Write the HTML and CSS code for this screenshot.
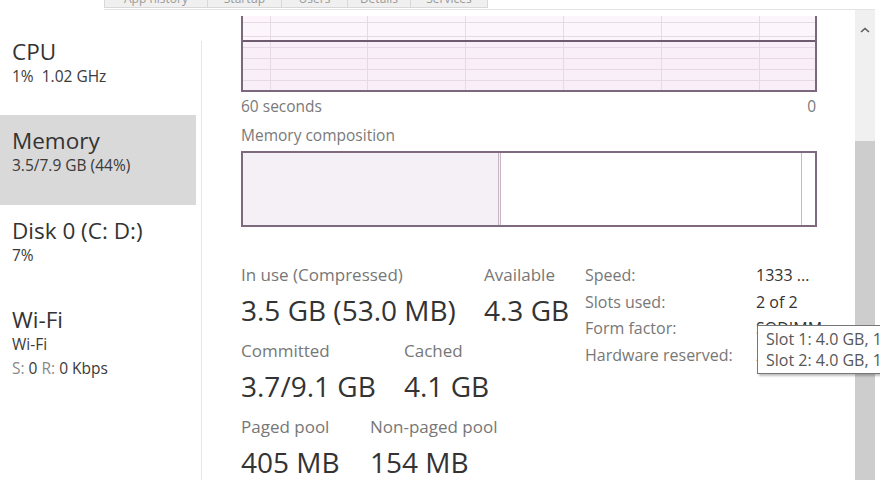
FILE: index.html
```html
<!DOCTYPE html>
<html lang="en">
<head>
    <meta charset="UTF-8">
    <title>Task Manager - Memory</title>
    <link rel="stylesheet" href="styles.css">
</head>
<body>
    <!-- Onglets (coupés en haut) -->
    <div class="tabs">
        <div class="tab" style="width: 104px">App history</div>
        <div class="tab" style="width: 74px">Startup</div>
        <div class="tab" style="width: 66px">Users</div>
        <div class="tab" style="width: 63px">Details</div>
        <div class="tab" style="width: 77px">Services</div>
    </div>

    <div class="main">
        <!-- Liste des ressources -->
        <div class="sidebar">
            <div class="item">
                <div class="item-title">CPU</div>
                <div class="item-sub">1%&nbsp; 1.02 GHz</div>
            </div>
            <div class="item selected">
                <div class="item-title">Memory</div>
                <div class="item-sub">3.5/7.9 GB (44%)</div>
            </div>
            <div class="item">
                <div class="item-title">Disk 0 (C: D:)</div>
                <div class="item-sub">7%</div>
            </div>
            <div class="item">
                <div class="item-title">Wi-Fi</div>
                <div class="item-sub">Wi-Fi</div>
                <div class="item-sub"><span class="dim">S:</span> 0 <span class="dim">R:</span> 0 Kbps</div>
            </div>
        </div>
        <div class="divider"></div>

        <!-- Détails mémoire -->
        <div class="content">
            <div class="graph">
                <svg width="576" height="76" viewBox="0 0 576 76">
                    <rect x="0" y="0" width="576" height="76" fill="#fcf6fc"/>
                    <rect x="0" y="25" width="576" height="51" fill="#f8eff8"/>
                    <g stroke="#e6dae6" stroke-width="1">
                        <line x1="0" y1="6.5" x2="576" y2="6.5"/>
                        <line x1="0" y1="20.5" x2="576" y2="20.5"/>
                        <line x1="0" y1="31.5" x2="576" y2="31.5"/>
                        <line x1="0" y1="42.5" x2="576" y2="42.5"/>
                        <line x1="0" y1="53.5" x2="576" y2="53.5"/>
                        <line x1="0" y1="64.5" x2="576" y2="64.5"/>
                        <line x1="29.5" y1="0" x2="29.5" y2="76"/>
                        <line x1="126.5" y1="0" x2="126.5" y2="76"/>
                        <line x1="224.5" y1="0" x2="224.5" y2="76"/>
                        <line x1="322.5" y1="0" x2="322.5" y2="76"/>
                        <line x1="420.5" y1="0" x2="420.5" y2="76"/>
                        <line x1="518.5" y1="0" x2="518.5" y2="76"/>
                    </g>
                    <line x1="0" y1="25" x2="576" y2="25" stroke="#6f5b70" stroke-width="2"/>
                    <path d="M1 0 V75 H575 V0" fill="none" stroke="#7c687d" stroke-width="2"/>
                </svg>
            </div>
            <div class="axis">
                <span>60 seconds</span>
                <span>0</span>
            </div>
            <div class="caption">Memory composition</div>
            <div class="composition">
                <div class="seg seg-used" style="width: 255px"></div>
                <div class="seg seg-free" style="width: 300px"></div>
                <div class="seg seg-rest"></div>
            </div>

            <div class="details">
                <div class="stats">
                    <div class="stat-row">
                        <div class="stat" style="width: 243px">
                            <div class="label">In use (Compressed)</div>
                            <div class="value">3.5 GB (53.0 MB)</div>
                        </div>
                        <div class="stat">
                            <div class="label">Available</div>
                            <div class="value">4.3 GB</div>
                        </div>
                    </div>
                    <div class="stat-row">
                        <div class="stat" style="width: 163px">
                            <div class="label">Committed</div>
                            <div class="value">3.7/9.1 GB</div>
                        </div>
                        <div class="stat">
                            <div class="label">Cached</div>
                            <div class="value">4.1 GB</div>
                        </div>
                    </div>
                    <div class="stat-row">
                        <div class="stat" style="width: 129px">
                            <div class="label">Paged pool</div>
                            <div class="value">405 MB</div>
                        </div>
                        <div class="stat">
                            <div class="label">Non-paged pool</div>
                            <div class="value">154 MB</div>
                        </div>
                    </div>
                </div>

                <div class="props">
                    <div class="prop"><span class="prop-name">Speed:</span><span class="prop-val">1333 ...</span></div>
                    <div class="prop"><span class="prop-name">Slots used:</span><span class="prop-val">2 of 2</span></div>
                    <div class="prop"><span class="prop-name">Form factor:</span><span class="prop-val">SODIMM</span></div>
                    <div class="prop"><span class="prop-name">Hardware reserved:</span><span class="prop-val">222 MB</span></div>

                    <!-- Infobulle -->
                    <div class="tooltip">
                        <div>Slot 1: 4.0 GB, 1333 MHz</div>
                        <div>Slot 2: 4.0 GB, 1333 MHz</div>
                    </div>
                </div>
            </div>
        </div>

        <!-- Barre de défilement -->
        <div class="scrollbar">
            <div class="arrow">
                <svg width="10" height="6" viewBox="0 0 10 6"><path d="M1 5 L5 1.5 L9 5" fill="none" stroke="#5a5a5a" stroke-width="1.6"/></svg>
            </div>
            <div class="thumb"></div>
        </div>
    </div>
</body>
</html>
```

FILE: styles.css
```css
body {
    margin: 0;
    width: 880px;
    height: 480px;
    overflow: hidden;
    background-color: #fff;
    font-family: "Open Sans", "Noto Sans", sans-serif;
    color: #333;
}

.tabs {
    display: flex;
    margin-left: 104px;
    margin-right: 5px;
    height: 9px;
    border-bottom: 1px solid #e3e3e3;
    overflow: hidden;
}

.tab {
    height: 18px;
    margin-top: -10px;
    background-color: #f0f0f0;
    border: 1px solid #d8d8d8;
    border-left: none;
    box-sizing: border-box;
    font-size: 12px;
    line-height: 16px;
    text-align: center;
    color: #9a9a9a;
}

.tab:first-child {
    border-left: 1px solid #d8d8d8;
}

.main {
    display: flex;
    height: 470px;
}

.sidebar {
    width: 196px;
    flex-shrink: 0;
    padding-top: 16px;
}

.item {
    height: 89px;
    padding: 13px 0 0 12px;
    box-sizing: border-box;
}

.item.selected {
    background-color: #d9d9d9;
    height: 90px;
}

.item-title {
    font-size: 22.5px;
    line-height: 25px;
    color: #333;
}

.item-sub {
    font-size: 15.5px;
    line-height: 24px;
    color: #3a3a3a;
}

.item-sub .dim {
    color: #8a8a8a;
}

.divider {
    width: 1px;
    flex-shrink: 0;
    margin: 31px 0 0 5px;
    background-color: #e6e6e6;
}

.content {
    width: 576px;
    flex-shrink: 0;
    padding: 6px 0 0 39px;
}

.graph {
    height: 76px;
    line-height: 0;
}

.axis {
    display: flex;
    justify-content: space-between;
    font-size: 15.5px;
    line-height: 18px;
    margin-top: 5px;
    padding-right: 1px;
    color: #7a7a7a;
}

.caption {
    font-size: 15.5px;
    line-height: 18px;
    margin-top: 11px;
    color: #7a7a7a;
}

.composition {
    display: flex;
    height: 76px;
    margin-top: 7px;
    border: 2px solid #7e697f;
    box-sizing: border-box;
}

.seg-used {
    background-color: #f5f0f5;
    border-right: 3px double #c6b6c7;
}

.seg-free {
    border-right: 1px solid #c6b6c7;
}

.seg-rest {
    flex: 1;
}

.details {
    display: flex;
    margin-top: 37px;
}

.stats {
    width: 344px;
    flex-shrink: 0;
}

.stat-row {
    display: flex;
    height: 76px;
}

.label {
    font-size: 17px;
    line-height: 22px;
    color: #777;
}

.value {
    font-size: 28px;
    line-height: 48px;
    color: #333;
}

.props {
    position: relative;
    margin-top: -2px;
}

.prop {
    display: flex;
    font-size: 16px;
    line-height: 26.7px;
}

.prop-name {
    width: 171px;
    flex-shrink: 0;
    color: #777;
}

.prop-val {
    color: #333;
    white-space: nowrap;
}

.tooltip {
    position: absolute;
    left: 172px;
    top: 63px;
    width: 150px;
    padding: 3px 0 2px 8px;
    background-color: #fff;
    border: 1px solid #767676;
    box-shadow: 2px 2px 2px rgba(0, 0, 0, 0.25);
    font-size: 16px;
    line-height: 21px;
    color: #575757;
    white-space: nowrap;
    overflow: hidden;
    z-index: 2;
}

.scrollbar {
    width: 20px;
    flex-shrink: 0;
    margin-left: 38px;
    background-color: #f0f0f0;
    display: flex;
    flex-direction: column;
}

.arrow {
    height: 131px;
    display: flex;
    justify-content: center;
    padding-top: 17px;
    box-sizing: border-box;
}

.thumb {
    flex: 1;
    background-color: #cdcdcd;
}
```
